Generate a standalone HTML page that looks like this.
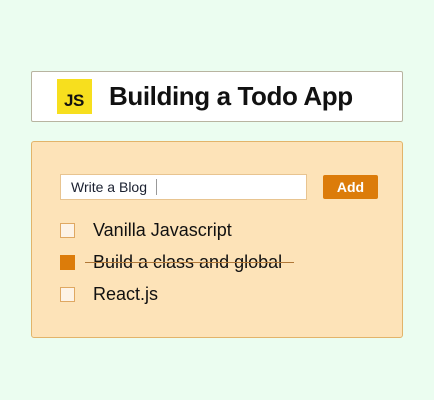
<!DOCTYPE html>
<html><head><style>
body{margin:0;width:434px;height:400px;background:#ebfdf0;position:relative;font-family:"Liberation Sans",sans-serif;overflow:hidden}
.hd{position:absolute;left:31px;top:71px;width:370px;height:49px;background:#fff;border:1px solid #b8b4a0;border-radius:2px}
.js{position:absolute;left:57px;top:79px;width:35px;height:35px;background:#f7df1e}
.js span{position:absolute;left:7px;bottom:3px;font-weight:bold;font-size:17px;color:#111;letter-spacing:-0.5px}
.tt{position:absolute;left:109px;top:81px;font-size:26px;font-weight:bold;color:#111;letter-spacing:-0.4px}
.box{position:absolute;left:31px;top:141px;width:370px;height:195px;background:#fde3b8;border:1px solid #e2b46a;border-radius:3px}
.in{position:absolute;left:60px;top:174px;width:245px;height:24px;background:#fff;border:1px solid #e8c490}
.in span{position:absolute;left:10px;top:4px;font-size:14px;color:#1a2030}
.cur{position:absolute;left:95px;top:4px;width:1px;height:16px;background:#999}
.add{position:absolute;left:323px;top:175px;width:55px;height:24px;background:#dc7c0a;border-radius:2px;color:#fff;font-weight:bold;font-size:14px;text-align:center;line-height:24px}
.cb{position:absolute;left:60px;width:13px;height:13px;background:#fdf3e6;border:1px solid #dfa862}
.it{position:absolute;left:93px;font-size:18px;color:#111}
</style></head><body>
<div class="hd"></div>
<div class="js"><span>JS</span></div>
<div class="tt">Building a Todo App</div>
<div class="box"></div>
<div class="in"><span>Write a Blog</span><div class="cur"></div></div>
<div class="add">Add</div>
<div class="cb" style="top:223px"></div><div class="it" style="top:220px">Vanilla Javascript</div>
<div class="cb" style="top:255px;background:#dc7c0a;border-color:#dc7c0a"></div><div class="it" style="top:252px">Build a class and global</div>
<div style="position:absolute;left:85px;top:262px;width:209px;height:1px;background:#b07838"></div>
<div class="cb" style="top:287px"></div><div class="it" style="top:284px">React.js</div>
</body></html>
